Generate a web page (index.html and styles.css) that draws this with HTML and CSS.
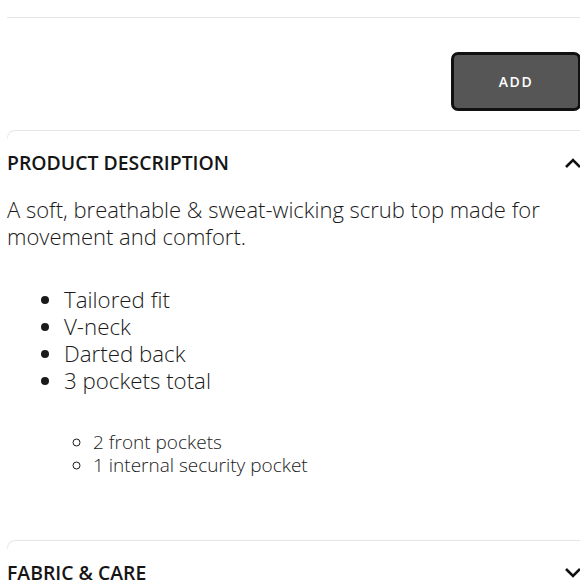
FILE: index.html
```html
<!DOCTYPE html>
<html>
<head>
<meta charset="utf-8">
<link rel="stylesheet" href="styles.css">
</head>
<body>
<div class="page">
  <div class="rule"></div>
  <div class="actions">
    <button class="add-btn">ADD</button>
  </div>
  <section class="acc">
    <div class="acc-edge"></div>
    <div class="acc-head">
      <h2 class="acc-title">PRODUCT DESCRIPTION</h2>
      <svg class="chev" width="18" height="12" viewBox="0 0 18 12"><path d="M2 10 L9 3 L16 10" fill="none" stroke="#111" stroke-width="2.6"/></svg>
    </div>
    <div class="acc-body">
      <p class="desc">A soft, breathable &amp; sweat-wicking scrub top made for movement and comfort.</p>
      <ul class="feat">
        <li>Tailored fit</li>
        <li>V-neck</li>
        <li>Darted back</li>
        <li>3 pockets total</li>
      </ul>
      <ul class="sub">
        <li>2 front pockets</li>
        <li>1 internal security pocket</li>
      </ul>
    </div>
  </section>
  <section class="acc acc2">
    <div class="acc-edge"></div>
    <div class="acc-head">
      <h2 class="acc-title">FABRIC &amp; CARE</h2>
      <svg class="chev" width="18" height="12" viewBox="0 0 18 12"><path d="M2 2 L9 9 L16 2" fill="none" stroke="#111" stroke-width="2.6"/></svg>
    </div>
  </section>
</div>
</body>
</html>
```
FILE: styles.css
```css
html, body {
  margin: 0;
  padding: 0;
  background: #fff;
  overflow: hidden;
}
body {
  font-family: "Open Sans", "Liberation Sans", sans-serif;
  color: #1c1c1c;
}
.page {
  margin-left: 7px;
  width: 573px;
  padding-top: 17px;
}
.rule {
  border-top: 1px solid #e6e6e6;
  margin-right: -10px;
}
.actions {
  display: flex;
  justify-content: flex-end;
  margin-top: 34px;
}
.add-btn {
  width: 130px;
  height: 59px;
  background: #565656;
  border: 3px solid #111;
  border-radius: 7px;
  color: #fff;
  font-family: "Open Sans", "Liberation Sans", sans-serif;
  font-weight: 600;
  font-size: 14px;
  letter-spacing: 1.5px;
  padding: 0;
  margin-right: -1px;
}
.acc {
  margin-top: 19px;
}
.acc-edge {
  height: 8px;
  border-top: 1px solid #e6e6e6;
  border-left: 1px solid #ececec;
  border-top-left-radius: 8px;
  margin-right: -10px;
}
.acc-head {
  display: flex;
  justify-content: space-between;
  align-items: center;
  padding-top: 11px;
}
.acc-title {
  margin: 0;
  font-size: 19.4px;
  line-height: 26px;
  font-weight: 600;
  color: #151515;
}
.chev {
  display: block;
  margin-right: -2px;
}
.desc {
  margin: 20px 0 0 0;
  font-size: 22px;
  line-height: 27px;
  font-weight: 300;
  color: #1a1a1a;
  width: 570px;
}
.feat {
  margin: 36px 0 0 0;
  padding-left: 57px;
  font-size: 22.3px;
  line-height: 27px;
  font-weight: 300;
  color: #1a1a1a;
  list-style: disc;
}
.sub {
  margin: 37px 0 0 0;
  padding-left: 86px;
  font-size: 19px;
  line-height: 23px;
  font-weight: 300;
  color: #1a1a1a;
  list-style: circle;
}
.acc2 {
  margin-top: 63px;
}
```
